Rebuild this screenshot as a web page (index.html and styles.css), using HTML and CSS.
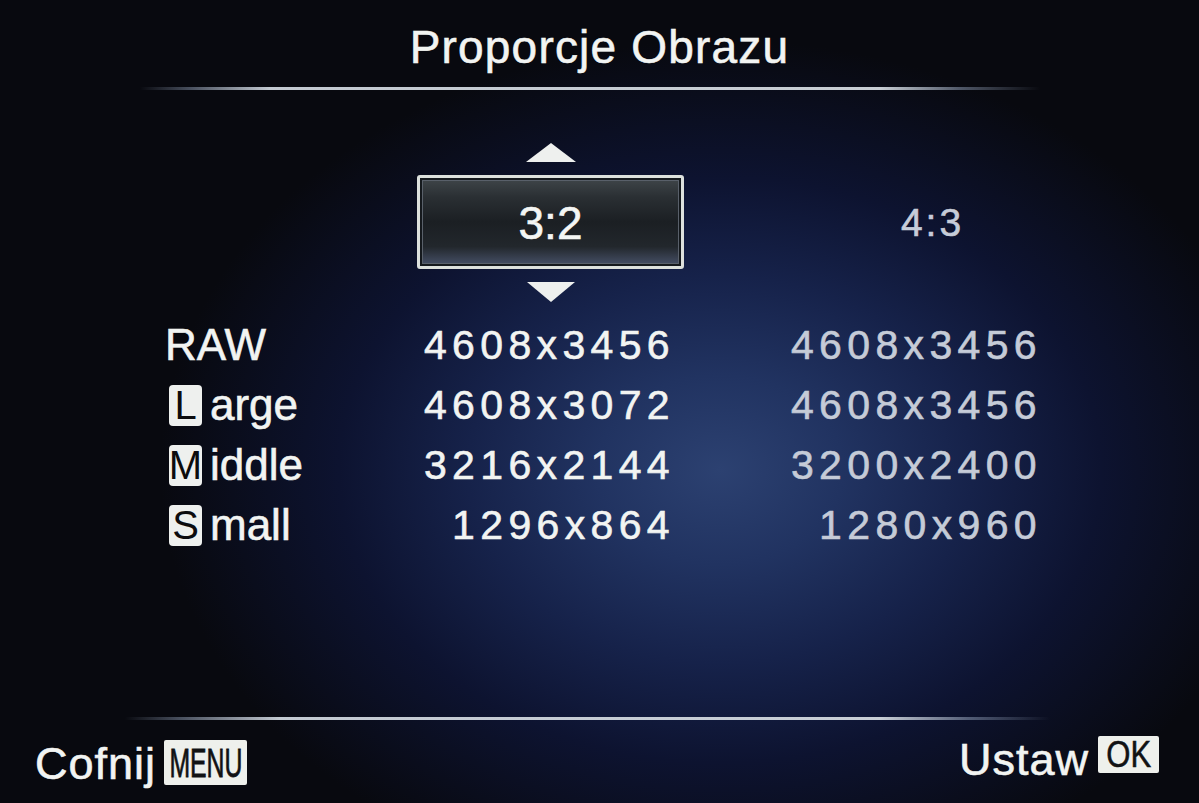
FILE: index.html
```html
<!DOCTYPE html>
<html lang="pl">
<head>
<meta charset="utf-8">
<title>Proporcje Obrazu</title>
<link rel="stylesheet" href="styles.css">
</head>
<body>
<div class="screen">
  <header class="head">
    <h1 class="title">Proporcje Obrazu</h1>
  </header>
  <div class="rule rule-top"></div>
  <main class="content">
    <div class="picker">
      <div class="selector">
        <svg class="arrow" width="50" height="19" viewBox="0 0 50 19"><polygon points="25,0 50,19 0,19" fill="#eef0ee"/></svg>
        <div class="selected"><span>3:2</span></div>
        <svg class="arrow" width="48" height="20" viewBox="0 0 48 20"><polygon points="0,0 48,0 24,20" fill="#eef0ee"/></svg>
      </div>
      <div class="alt">4:3</div>
    </div>

    <div class="rows">
      <div class="label">RAW</div>
      <div class="num">4608x3456</div>
      <div class="num dim">4608x3456</div>

      <div class="label"><span class="badge">L</span><span class="word">arge</span></div>
      <div class="num">4608x3072</div>
      <div class="num dim">4608x3456</div>

      <div class="label"><span class="badge">M</span><span class="word">iddle</span></div>
      <div class="num">3216x2144</div>
      <div class="num dim">3200x2400</div>

      <div class="label"><span class="badge">S</span><span class="word">mall</span></div>
      <div class="num">1296x864</div>
      <div class="num dim">1280x960</div>
    </div>
  </main>
  <div class="rule rule-bottom"></div>
  <footer class="foot">
    <div class="action action-back">
      <span class="action-text">Cofnij</span>
      <span class="key key-menu"><span class="key-text">MENU</span></span>
    </div>
    <div class="action action-set">
      <span class="action-text">Ustaw</span>
      <span class="key key-ok"><span class="key-text">OK</span></span>
    </div>
  </footer>
</div>
</body>
</html>
```

FILE: styles.css
```css
html, body {
  margin: 0;
  padding: 0;
  background: #08080e;
}

.screen {
  width: 1199px;
  height: 803px;
  overflow: hidden;
  display: flex;
  flex-direction: column;
  font-family: "Liberation Sans", Arial, sans-serif;
  color: #eef0ee;
  -webkit-text-stroke: 0.6px currentColor;
  background:
    radial-gradient(ellipse 560px 430px at 720px 470px, #2c4171 0%, #213361 22%, #16224a 45%, #0d1330 68%, #08090f 100%);
}

.head {
  padding-top: 24px;
  display: flex;
  justify-content: center;
}

.title {
  margin: 0;
  font-size: 46px;
  line-height: 46px;
  font-weight: normal;
  letter-spacing: 1.2px;
  color: #f2f4f2;
}

.rule {
  height: 3px;
  flex: none;
}

.rule-top {
  margin-top: 17px;
  background: linear-gradient(90deg,
    rgba(150,165,190,0) 140px,
    rgba(150,165,190,0.45) 190px,
    rgba(205,212,220,0.95) 270px,
    rgba(210,216,222,0.95) 880px,
    rgba(150,165,190,0.5) 960px,
    rgba(150,165,190,0) 1040px);
}

.rule-bottom {
  background: linear-gradient(90deg,
    rgba(150,165,190,0) 125px,
    rgba(150,165,190,0.45) 180px,
    rgba(205,212,220,0.95) 280px,
    rgba(210,216,222,0.95) 880px,
    rgba(150,165,190,0.5) 970px,
    rgba(150,165,190,0) 1050px);
}

.content {
  flex: 1;
  padding-top: 53px;
  padding-left: 165px;
}

.picker,
.rows {
  display: grid;
  grid-template-columns: 252px 267px 100px 259px;
}

.picker {
  margin-bottom: 13px;
}

.rows {
  grid-auto-rows: 60px;
}

.selector {
  grid-column: 2;
  display: flex;
  flex-direction: column;
  align-items: center;
}

.arrow {
  display: block;
}

.selected {
  box-sizing: border-box;
  width: 267px;
  height: 94px;
  margin: 13px 0;
  border: 3px solid #dde1dd;
  border-radius: 3px;
  box-shadow: inset 0 0 0 2px #15191d, inset 0 0 0 3px #59606a;
  background: linear-gradient(180deg, #40464a 0%, #2a2f33 22%, #1b1f23 50%, #22272c 78%, #48526a 100%);
  display: flex;
  align-items: center;
  justify-content: center;
}

.selected span {
  font-size: 46px;
  line-height: 46px;
  color: #f4f6f4;
  margin-top: 2px;
}

.alt {
  grid-column: 4;
  align-self: center;
  text-align: center;
  font-size: 39px;
  line-height: 40px;
  letter-spacing: 3px;
  padding-left: 38px;
  color: #c6ccd8;
}

.label {
  grid-column: 1;
  display: flex;
  align-items: center;
  font-size: 44px;
  line-height: 44px;
  color: #f2f4f2;
}

.badge {
  box-sizing: border-box;
  width: 33px;
  height: 41px;
  margin-left: 4px;
  margin-right: 8px;
  border-radius: 4px;
  background: #eef0ee;
  color: #0c0c0e;
  -webkit-text-stroke: 0;
  font-size: 40px;
  line-height: 41px;
  display: flex;
  align-items: center;
  justify-content: center;
}

.num {
  grid-column: 2;
  text-align: right;
  font-size: 41px;
  line-height: 60px;
  letter-spacing: 5.35px;
  padding-right: 9px;
  color: #f2f4f2;
}

.num.dim {
  grid-column: 4;
  padding-right: 1px;
  color: #c5cbd7;
}

.foot {
  height: 83px;
  box-sizing: border-box;
  padding: 16px 40px 0 35px;
  display: flex;
  justify-content: space-between;
  align-items: flex-start;
}

.action {
  display: flex;
  align-items: flex-start;
}

.action-back {
  margin-top: 4px;
}

.action-text {
  font-size: 45px;
  line-height: 45px;
  letter-spacing: 1px;
  color: #f2f4f2;
}

.action-back .action-text {
  margin-top: 1px;
  margin-right: 8px;
}

.action-set .action-text {
  margin-top: 1px;
  margin-right: 9px;
}

.key {
  background: #eef0ec;
  color: #111214;
  display: flex;
  align-items: center;
  justify-content: center;
  border-radius: 2px;
}

.key-text {
  display: inline-block;
}

.key-menu {
  width: 83px;
  height: 45px;
}

.key-menu .key-text {
  font-size: 40px;
  line-height: 40px;
  transform: scaleX(0.62);
  -webkit-text-stroke: 0.8px currentColor;
}

.key-ok {
  width: 61px;
  height: 37px;
}

.key-ok .key-text {
  font-size: 37px;
  line-height: 37px;
  transform: scaleX(0.84);
  -webkit-text-stroke: 0.5px currentColor;
}
```
